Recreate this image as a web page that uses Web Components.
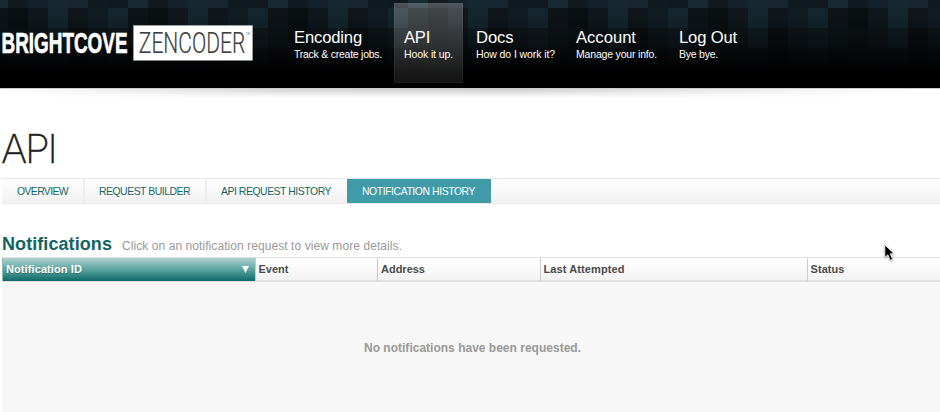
<!DOCTYPE html><html lang="en"><head><meta charset="utf-8"><title>Zencoder API</title>
<style>html,body{margin:0;background:#fff;overflow:hidden}</style></head><body>
<zen-app></zen-app>
<script>
function define(name, html, setup){
  customElements.define(name, class extends HTMLElement{
    constructor(){super();this.attachShadow({mode:'open'}).innerHTML=html;}
    connectedCallback(){if(setup)setup(this,this.shadowRoot);}
  });
}
const fit=(host,el)=>{const w=+host.getAttribute('w');if(!w)return;
  const n=host.textContent.length,cur=el.getBoundingClientRect().width;
  el.style.letterSpacing=((w-cur)/n)+'px';};
define('fit-text','<style>:host{display:inline-block;white-space:nowrap}</style><span><slot></slot></span>',(h,r)=>fit(h,r.querySelector('span')));

define('zen-tiles','<style>:host{display:grid;grid-template-columns:repeat(48,20px);grid-template-rows:8px repeat(4,20px);margin-left:-12px;width:960px;height:88px}</style>',(h,r)=>{
  const rows=[
    ['#111a21','#14202a','#182831','#18262f','#101a21','#101920','#192a33'],
    ['#0a0f12','#0f171c','#15262e','#0e161b','#111b22','#15252d','#0d1418'],
    ['#0b1114','#0d1418','#111d22','#0a0f12','#0e161a','#101a1f','#0d1418'],
    ['#0b1012','#0b1114','#0b1114','#080b0d','#0a0f11','#0c1315','#090d0f'],
    ['#050708','#050708','#060808','#040506','#050708','#060808','#050607']];
  rows.forEach(row=>{for(let i=0;i<48;i++){const d=document.createElement('div');d.style.background=row[(i+6)%7];r.append(d);}});
});
define('zen-logo',`<style>:host{display:block;width:256px;height:88px}svg{display:block;overflow:visible}</style>
<svg width="256" height="88" viewBox="0 0 256 88"><text x="1.5" y="53" textLength="126" lengthAdjust="spacingAndGlyphs" font-family="Liberation Sans" font-weight="700" font-size="29.5" fill="#fff" stroke="#fff" stroke-width=".7">BRIGHTCOVE</text>
<rect x="133.4" y="25.4" width="119.2" height="35" fill="#fff" stroke="#999" stroke-width=".5"/>
<text x="138.8" y="53" textLength="106.5" lengthAdjust="spacingAndGlyphs" font-family="Roboto" font-weight="300" font-size="29" fill="#3c3f42" stroke="#3c3f42" stroke-width=".2">ZENCODER</text>
<text x="245.6" y="34.5" font-family="Liberation Sans" font-size="3.2" fill="#777">TM</text></svg>`);
define('nav-item',`<style>:host{display:block;box-sizing:border-box;height:80px;margin-top:3px;padding:25px 10px 0;color:#fff;font-family:"Liberation Sans",sans-serif}
:host([active]){background:linear-gradient(rgba(255,255,255,.24),rgba(255,255,255,.08));box-shadow:inset 0 0 0 1px rgba(255,255,255,.05)}
.t{font-size:16.6px;line-height:20px}.s{font-size:10.5px;line-height:12px}</style><div class="t"><slot name="t"></slot></div><div class="s"><slot></slot></div>`);
define('zen-header',`<style>:host{display:block;position:relative;height:88px;background:#000;overflow:hidden}
.fade{position:absolute;inset:0;background:linear-gradient(transparent 0,transparent 14px,rgba(0,0,0,.4) 48px,#000 76px)}
.bar{position:absolute;inset:0;display:grid;grid-template-columns:284px 110px 72px 100px 103px auto}nav-item{width:max-content}nav-item[active]{width:69px}</style>
<zen-tiles></zen-tiles><div class="fade"></div><div class="bar"><zen-logo></zen-logo>
<nav-item><fit-text slot="t" w="68">Encoding</fit-text><fit-text w="88">Track &amp; create jobs.</fit-text></nav-item>
<nav-item active><fit-text slot="t" w="26">API</fit-text><fit-text w="49">Hook it up.</fit-text></nav-item>
<nav-item><fit-text slot="t" w="37.5">Docs</fit-text><fit-text w="79">How do I work it?</fit-text></nav-item>
<nav-item><fit-text slot="t" w="60">Account</fit-text><fit-text w="81">Manage your info.</fit-text></nav-item>
<nav-item><fit-text slot="t" w="58">Log Out</fit-text><fit-text w="39">Bye bye.</fit-text></nav-item></div>`);
define('zen-shadow',`<style>:host{display:block;height:10px;border-top:1px solid #ccc;box-sizing:border-box;background:linear-gradient(rgba(255,255,255,0),#fff),linear-gradient(90deg,#fff 0,#d4d4d4 30%,#cfcfcf 55%,#fff 97%)}</style>`);
define('page-title',`<style>:host{display:block;height:80px;padding:26px 0 0 2px;box-sizing:border-box}svg{display:block;overflow:visible}</style>
<svg width="70" height="54"><text x="-1" y="39" dx="0 -2.2 -2.2" font-family="Inter" font-weight="200" font-size="40" fill="#222" stroke="#222" stroke-width=".3">API</text></svg>`);
define('tab-item',`<style>:host{display:block;box-sizing:border-box;padding:1px 0 0 15px;line-height:23px;border-right:2px solid #eee;color:#176766}
:host([wide]){padding-left:14px}
:host([active]){background:#3f9ba8;color:#fff;border:0}:host([last]){border:0;padding-left:14px}</style><slot></slot>`);
define('tab-bar',`<style>:host{display:grid;grid-template-columns:83px 122px 140px 144px;margin-left:2px;height:24px;border-top:1px solid #e8e8e8;border-bottom:1px solid #eaeaea;background:linear-gradient(#fff,#f1f1f1);font:10.4px "Liberation Sans",sans-serif}</style>
<tab-item><fit-text w="51">OVERVIEW</fit-text></tab-item><tab-item wide><fit-text w="91">REQUEST BUILDER</fit-text></tab-item><tab-item last><fit-text w="110">API REQUEST HISTORY</fit-text></tab-item><tab-item active><fit-text w="113">NOTIFICATION HISTORY</fit-text></tab-item>`);
define('section-title',`<style>:host{display:flex;align-items:baseline;gap:10px;height:53px;padding:30px 0 0 2px;box-sizing:border-box;font:12px/20px "Liberation Sans",sans-serif;color:#999}.h{font-size:18px;font-weight:700;color:#126463}</style>
<fit-text class="h" w="110">Notifications</fit-text><fit-text w="280">Click on an notification request to view more details.</fit-text>`);
define('col-head',`<style>:host{display:flex;box-sizing:border-box;padding:0 6px 0 3px;justify-content:space-between;line-height:23px;border-left:1px solid #ccc;color:#4a4a4a}
:host([active]){background:linear-gradient(#add1cf,#5ba4a1 50%,#0e6a68);color:#fff;border-left-color:#8cb6b4;text-shadow:0 1px 1px rgba(0,0,0,.25)}::slotted(svg){margin-top:8px}</style><slot></slot>`);
define('data-table',`<style>:host{display:block;margin-left:2px;font:700 11px "Liberation Sans",sans-serif}
.r{display:grid;grid-template-columns:252.5px 122.5px 162.5px 267px 1fr;height:22px;border-top:1px solid #e2e2e2;border-bottom:2px solid #dfdfdf;background:linear-gradient(#fff,#f3f3f3)}
.b{height:160px;background:#f7f7f7;color:#999;font-size:12px;text-align:center;padding-top:58px;line-height:16px;box-sizing:border-box;padding-left:3px}</style>
<div class="r"><col-head active><fit-text w="76">Notification ID</fit-text><svg width="7" height="8"><path d="M0 0H7L3.5 7Z" fill="#fff"/></svg></col-head><col-head><fit-text w="30">Event</fit-text></col-head><col-head><fit-text w="44">Address</fit-text></col-head><col-head><fit-text w="81">Last Attempted</fit-text></col-head><col-head><fit-text w="34">Status</fit-text></col-head></div>
<div class="b"><fit-text w="217">No notifications have been requested.</fit-text></div>`);
define('mouse-pointer',`<style>:host{position:absolute;left:884px;top:244px}svg{display:block;filter:drop-shadow(0 1px 1px rgba(0,0,0,.3))}</style>
<svg width="13" height="20"><path d="M.8 .8V13.6L3.8 10.8L6.2 16.4L8.7 15.3L6.3 9.8H10.2Z" fill="#000" stroke="#fff" stroke-width=".8"/></svg>`);
define('zen-app',`<style>:host{display:block;position:relative;width:940px;height:412px;overflow:hidden;background:#fff}</style>
<zen-header></zen-header><zen-shadow></zen-shadow><page-title></page-title><tab-bar></tab-bar><section-title></section-title><data-table></data-table><mouse-pointer></mouse-pointer>`);
</script></body></html>
